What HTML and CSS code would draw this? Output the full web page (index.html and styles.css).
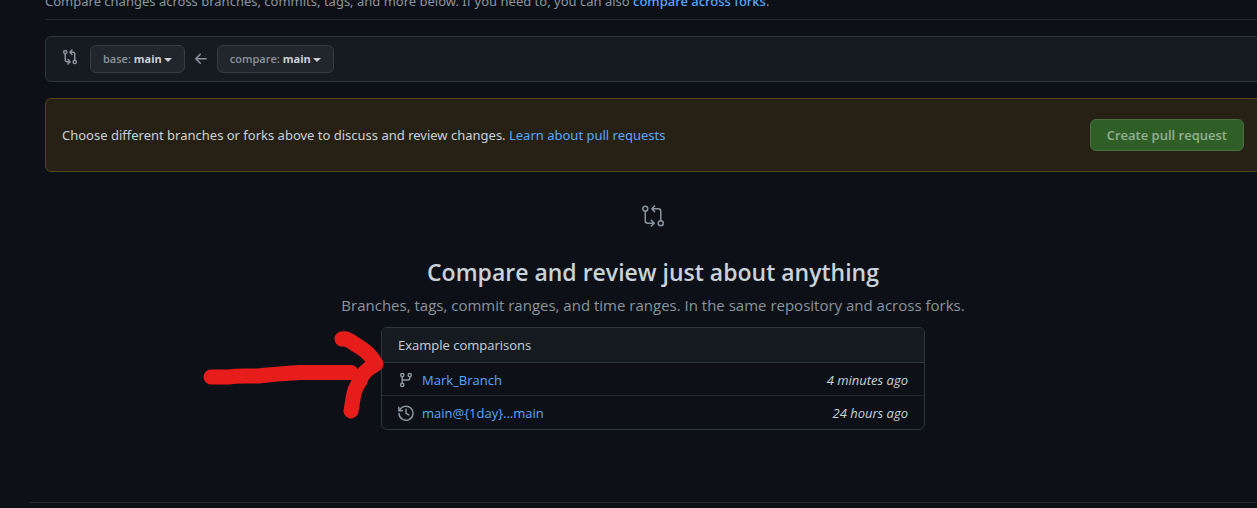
FILE: index.html
```html
<!DOCTYPE html>
<html lang="en">
<head>
<meta charset="utf-8">
<title>Compare changes</title>
<link rel="stylesheet" href="styles.css">
</head>
<body>
<main class="page">
  <header class="subhead">
    <p class="subhead-text">Compare changes across branches, commits, tags, and more below. If you need to, you can also <a class="link strong" href="#">compare across forks</a>.</p>
  </header>

  <section class="range" aria-label="Branch range">
    <svg class="icon range-icon" width="16" height="16" viewBox="0 0 16 16" aria-hidden="true">
      <circle cx="3.25" cy="3.1" r="1.6"/><circle cx="12.75" cy="12.9" r="1.6"/>
      <path d="M3.25 4.8v6.2q0 1.75 1.75 1.75h2.6M6 10.6l2.1 2.15L6 14.9M12.75 11.2V5q0-1.75-1.75-1.75H8.4M10 1.1L7.9 3.25 10 5.4"/>
    </svg>
    <button class="branch" type="button" aria-haspopup="true"><span class="muted">base:</span> <span class="ref">main</span><span class="caret"></span></button>
    <svg class="icon" width="16" height="16" viewBox="0 0 16 16" aria-hidden="true">
      <path d="M7.3 3.3L2.8 7.8l4.500 4.500M2.8 7.8h10.400"/>
    </svg>
    <button class="branch" type="button" aria-haspopup="true"><span class="muted">compare:</span> <span class="ref">main</span><span class="caret"></span></button>
  </section>

  <section class="notice">
    <p class="notice-text">Choose different branches or forks above to discuss and review changes. <a class="link" href="#">Learn about pull requests</a></p>
    <button class="create" type="button" disabled>Create pull request</button>
  </section>

  <section class="blank">
    <svg class="icon" width="24" height="24" viewBox="0 0 24 24" aria-hidden="true">
      <circle cx="4.25" cy="4.75" r="2.5"/><circle cx="19.75" cy="19.25" r="2.5"/>
      <path d="M4.25 7.3v9.4q0 2.5 2.5 2.5h6M10.4 16.4l2.8 2.8-2.8 2.8M19.75 16.7V7.3q0-2.5-2.5-2.5h-6M13.6 2l-2.8 2.8 2.8 2.8"/>
    </svg>
    <h1 class="blank-title">Compare and review just about anything</h1>
    <p class="blank-text">Branches, tags, commit ranges, and time ranges. In the same repository and across forks.</p>
    <div class="box">
      <h2 class="box-head">Example comparisons</h2>
      <ul class="box-list">
        <li class="row">
          <svg class="icon" width="16" height="16" viewBox="0 0 16 16" aria-hidden="true">
            <circle cx="4.25" cy="3.1" r="1.6"/><circle cx="11.75" cy="3.1" r="1.6"/><circle cx="4.25" cy="12.9" r="1.6"/>
            <path d="M4.25 4.8v6.4M11.75 4.8v1.4q0 1.75-1.75 1.75H4.25"/>
          </svg>
          <a class="link" href="#">Mark_Branch</a>
          <em class="when">4 minutes ago</em>
        </li>
        <li class="row">
          <svg class="icon" width="16" height="16" viewBox="0 0 16 16" aria-hidden="true">
            <path d="M1.6 5.4A7 7 0 1 1 1 8.6M.8 2.2v3.6h3.6M8 4.2V8.3l2.8 1.6"/>
          </svg>
          <a class="link" href="#">main@{1day}...main</a>
          <em class="when">24 hours ago</em>
        </li>
      </ul>
      <svg class="marker" width="184" height="92" viewBox="0 0 184 92" aria-hidden="true">
        <path d="M11 50L28 50Q36 49 44 49L58 49Q76 47 100 45.500L151 45.500M142 12C149 11 151 15 158 19Q170 26 176 37C170 41 163 44 160 54Q154 62 153 72L151 84"/>
      </svg>
    </div>
  </section>
</main>
<footer class="footer"></footer>
</body>
</html>
```
FILE: styles.css
```css
* { box-sizing: border-box; }

body {
  margin: 0;
  overflow: hidden;
  background: #0d1117;
  color: #c9d1d9;
  font-family: "Segoe UI", "Open Sans", "Noto Sans", sans-serif;
  font-size: 13px;
  line-height: 20px;
}

p, h1, h2, ul { margin: 0; padding: 0; }

.page { margin: -9px -4px 0 45px; }

.link { color: #58a6ff; text-decoration: none; }
.strong { font-weight: 500; }
.muted { color: #8b949e; }

.icon {
  flex: none;
  fill: none;
  stroke: #8b949e;
  stroke-width: 1.5;
  stroke-linecap: round;
  stroke-linejoin: round;
}

.subhead {
  padding-bottom: 8px;
  border-bottom: 1px solid #21262d;
  color: #8b949e;
}

.subhead-text,
.notice-text { font-family: "Segoe UI", "Noto Sans", sans-serif; }

.range {
  display: flex;
  align-items: center;
  gap: 12px;
  margin-top: 16px;
  padding: 8px 16px;
  background: #161b22;
  border: 1px solid #30363d;
  border-radius: 6px;
}

.range .icon { margin: 0 -4px; }
.range .range-icon { align-self: flex-start; margin: 4px 0 0; }

.branch {
  height: 28px;
  padding: 0 12px;
  background: #21262d;
  border: 1px solid #363b42;
  border-radius: 6px;
  color: #c9d1d9;
  font: 600 11px/20px "Segoe UI", "Open Sans", "Noto Sans", sans-serif;
}

.ref { font-weight: 700; }

.caret {
  display: inline-block;
  margin-left: 2px;
  vertical-align: middle;
  border: 4px solid transparent;
  border-top-color: currentColor;
  border-bottom: 0;
}

.notice {
  display: flex;
  align-items: center;
  justify-content: space-between;
  margin-top: 16px;
  padding: 20px 16px;
  background: #272115;
  border: 1px solid #5b450f;
  border-radius: 6px;
}

.create {
  height: 32px;
  padding: 0 16px;
  background: #2f5f26;
  border: 1px solid #46703c;
  border-radius: 6px;
  color: #97af91;
  font: 600 13px/20px "Segoe UI", "Open Sans", "Noto Sans", sans-serif;
}

.blank {
  display: flex;
  flex-direction: column;
  align-items: center;
  padding-top: 32px;
}

.blank-title { margin-top: 26px; font-size: 23px; line-height: 36px; font-weight: 600; }
.blank-text { margin-top: 3px; color: #8b949e; font-size: 15px; line-height: 24px; }

.box {
  position: relative;
  width: 544px;
  max-width: 100%;
  margin-top: 10px;
  border: 1px solid #30363d;
  border-radius: 6px;
}

.box-head {
  padding: 7px 16px;
  background: #161b22;
  border-bottom: 1px solid #30363d;
  border-radius: 5px 5px 0 0;
  font-size: 13px;
  font-weight: 400;
}

.box-list { list-style: none; padding-bottom: 1px; }

.row {
  display: flex;
  align-items: center;
  gap: 8px;
  padding: 7px 16px 5px;
}

.row + .row { border-top: 1px solid #21262d; }
.when { margin-left: auto; }

.marker {
  position: absolute;
  top: -1px;
  right: 100%;
  margin-right: -2px;
  fill: none;
  stroke: #e71d1c;
  stroke-width: 15;
  stroke-linecap: round;
  stroke-linejoin: round;
}

.footer { margin: 72px -20px 0 29px; border-top: 1px solid #21262d; }
```
